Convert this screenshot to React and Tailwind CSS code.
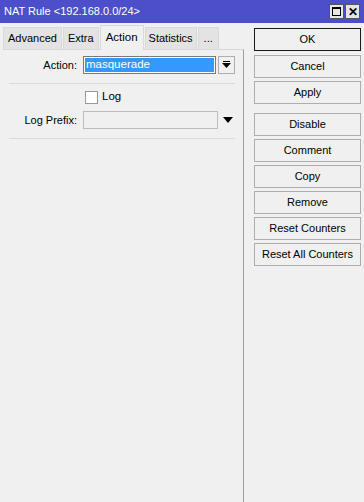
import React from 'react';

const font = { fontFamily: '"Liberation Sans", Arial, sans-serif' };

const Btn = ({ children, primary, className = '' }) => (
  <div
    className={`h-[23px] flex items-center justify-center text-[11px] text-black bg-[#f0f0f0] border ${
      primary ? 'border-[#1a1a1a]' : 'border-[#adadad]'
    } ${className}`}
  >
    {children}
  </div>
);

const Tab = ({ label, active, pad = 'px-[4px]' }) =>
  active ? (
    <div className="h-[25px] px-[5px] flex items-center bg-[#f0f0f0] border border-b-0 border-[#d9d9d9] -mb-px relative z-10 text-[11.5px]">
      {label}
    </div>
  ) : (
    <div className={`h-[22px] ${pad} flex items-center bg-[#e3e3e3] border border-b-0 border-[#d9d9d9] text-[11px]`}>
      {label}
    </div>
  );

export default function App() {
  return (
    <div className="w-[364px] h-[502px] bg-[#f0f0f0] flex flex-col overflow-hidden text-black" style={font}>
      <div className="h-[23px] shrink-0 bg-[#4c4fc9] flex items-center justify-between pl-[4px] pr-[4px]">
        <span className="text-white text-[11px]">NAT Rule &lt;192.168.0.0/24&gt;</span>
        <div className="flex gap-[1px]">
          <div className="w-[15px] h-[15px] bg-[#e5e5e5] border border-[#555] flex items-center justify-center">
            <div className="w-[9px] h-[9px] border border-black border-t-2" />
          </div>
          <div className="w-[15px] h-[15px] bg-[#e5e5e5] border border-[#555] flex items-center justify-center text-[12px] font-bold leading-none">
            ✕
          </div>
        </div>
      </div>

      <div className="flex-1 flex pt-[1px]">
        <div className="w-[244px] pl-[3px] flex flex-col">
          <div className="flex items-end gap-[1px] h-[25px]">
            <Tab label="Advanced" />
            <Tab label="Extra" />
            <Tab label="Action" active />
            <Tab label="Statistics" pad="px-[3px]" />
            <Tab label="..." pad="px-[5px]" />
          </div>
          <div className="flex-1 border-t border-r border-[#d9d9d9] border-r-[#a0a0a0] bg-[#f0f0f0] px-[6px] pt-[6px]">
            <div className="flex items-center h-[18px]">
              <div className="w-[70px] text-right text-[11px] pr-[2px]">Action:</div>
              <div className="ml-[4px] w-[133px] h-[18px] border border-[#7a7a7a] bg-[#3399ff] text-white text-[11.5px] flex items-center">
                <span className="h-full w-full border border-white flex items-center pl-[1px]">masquerade</span>
              </div>
              <div className="ml-[2px] w-[17px] h-[18px] border border-[#adadad] flex flex-col items-center justify-center">
                <div className="w-[7px] h-[1px] bg-black" />
                <svg width="9" height="6" viewBox="0 0 9 6" className="mt-[1px]">
                  <path d="M0 0 H9 L4.5 5 Z" fill="#000" />
                </svg>
              </div>
            </div>
            <div className="h-px bg-[#dadada] mt-[9px] mr-[2px]" />
            <div className="flex items-center mt-[6px] h-[14px]">
              <div className="ml-[76px] w-[13px] h-[13px] bg-white border border-[#999]" />
              <span className="ml-[4px] text-[11.5px]">Log</span>
            </div>
            <div className="flex items-center mt-[7px] h-[18px]">
              <div className="w-[70px] text-right text-[11px] pr-[2px]">Log Prefix:</div>
              <div className="ml-[4px] w-[135px] h-[18px] border border-[#bcbcbc] bg-[#f0f0f0]" />
              <svg width="10" height="6" viewBox="0 0 10 6" className="ml-[5px]">
                <path d="M0 0 H10 L5 6 Z" fill="#000" />
              </svg>
            </div>
            <div className="h-px bg-[#dadada] mt-[9px] mr-[2px]" />
          </div>
        </div>

        <div className="w-[107px] ml-[10px] pt-[4px] flex flex-col gap-[3px]">
          <Btn primary>OK</Btn>
          <Btn className="mt-[1px]">Cancel</Btn>
          <Btn>Apply</Btn>
          <div className="h-[3px]" />
          <Btn>Disable</Btn>
          <Btn>Comment</Btn>
          <Btn>Copy</Btn>
          <Btn>Remove</Btn>
          <Btn>Reset Counters</Btn>
          <Btn>Reset All Counters</Btn>
        </div>
      </div>
    </div>
  );
}
